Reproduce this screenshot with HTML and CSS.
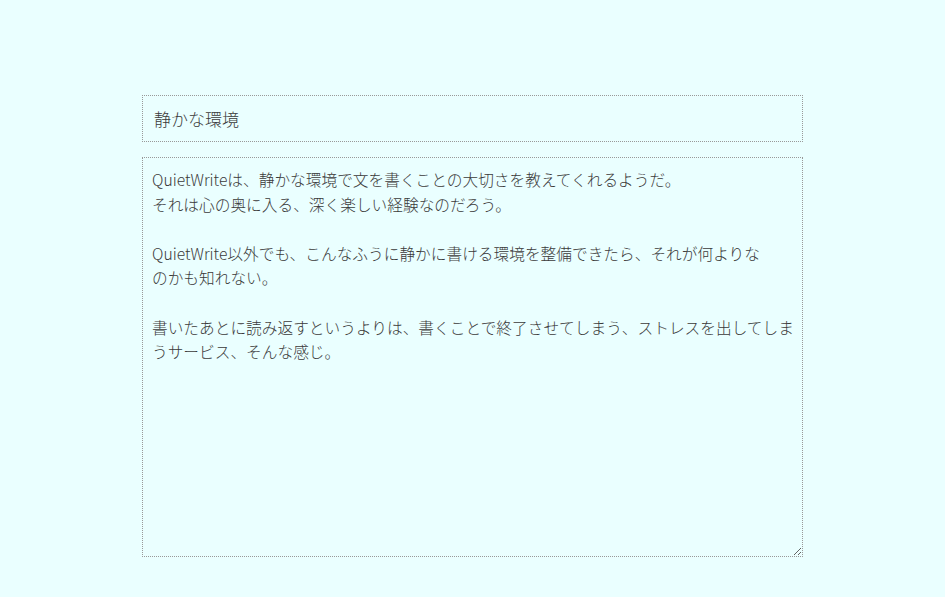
FILE: index.html
```html
<!DOCTYPE html>
<html lang="ja">
<head>
<meta charset="utf-8">
<title>QuietWrite</title>
<link rel="stylesheet" href="styles.css">
</head>
<body>
<main class="editor">
<input class="title" type="text" value="静かな環境">
<textarea class="body" wrap="off">QuietWriteは、静かな環境で文を書くことの大切さを教えてくれるようだ。
それは心の奥に入る、深く楽しい経験なのだろう。

QuietWrite以外でも、こんなふうに静かに書ける環境を整備できたら、それが何よりな
のかも知れない。

書いたあとに読み返すというよりは、書くことで終了させてしまう、ストレスを出してしま
うサービス、そんな感じ。</textarea>
</main>
</body>
</html>
```

FILE: styles.css
```css
html, body {
  margin: 0;
  padding: 0;
  background: #eaffff;
}
body {
  font-family: "Noto Sans CJK JP", "Noto Sans", sans-serif;
  color: #333;
}
.editor {
  width: 661px;
  margin: 95px auto 0;
  display: flex;
  flex-direction: column;
  gap: 15px;
}
.title {
  box-sizing: border-box;
  width: 100%;
  height: 47px;
  margin: 0;
  padding: 0 11px 1px;
  border: 1px dotted #999;
  background: transparent;
  font-family: "Noto Sans CJK JP", sans-serif;
  font-size: 17px;
  font-weight: 300;
  color: #3a3a3a;
  outline: none;
}
.body {
  box-sizing: border-box;
  width: 100%;
  height: 400px;
  margin: 0;
  padding: 10px 9px;
  border: 1px dotted #999;
  background: transparent;
  font-family: "Noto Sans CJK JP", sans-serif;
  font-size: 15.7px;
  font-weight: 300;
  line-height: 24.6px;
  color: #3a3a3a;
  white-space: pre;
  overflow: hidden;
  resize: both;
  outline: none;
}
```
